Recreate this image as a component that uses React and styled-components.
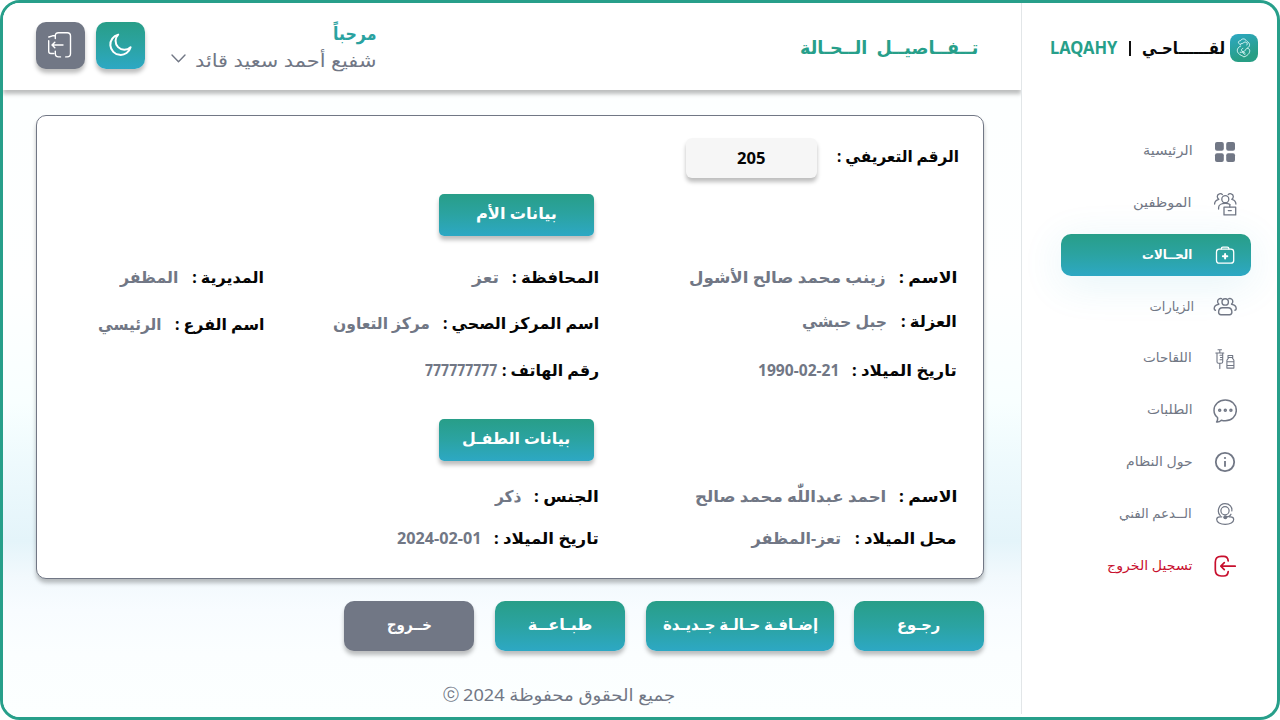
import React, { useLayoutEffect, useRef, useState } from 'react';
import styled, { createGlobalStyle } from 'styled-components';

const grad = 'linear-gradient(180deg, #289e88 0%, #2ba3a2 50%, #2da8c4 100%)';
const green = '#279f8a';
const grey = '#717785';
const drop = '0 4px 4px rgba(0, 0, 0, 0.26)';

const GlobalStyle = createGlobalStyle`
  * { box-sizing: border-box; }
  body { margin: 0; background: #fff; font-family: 'Noto Sans', 'DejaVu Sans', sans-serif; }
`;

const TextBox = styled.span`
  display: block;
  flex: none;
  width: ${(p) => p.$w}px;
  height: 24px;
  line-height: 24px;
  font-size: ${(p) => p.$size}px;
  font-weight: ${(p) => (p.$bold ? 700 : 400)};
  color: ${(p) => p.$color || 'inherit'};
  margin-top: ${(p) => p.$dy || 0}px;
`;
const TextRun = styled.span`
  display: inline-block;
  white-space: nowrap;
  transform-origin: right center;
`;

/* One line of text, stretched or condensed to fill a fixed measure. */
function Text({ w, size = 16, bold, color, dy, children }) {
  const ref = useRef(null);
  const [scale, setScale] = useState(1);
  useLayoutEffect(() => {
    setScale(w / ref.current.offsetWidth);
  }, [w, children]);
  return (
    <TextBox $w={w} $size={size} $bold={bold} $color={color} $dy={dy}>
      <TextRun ref={ref} style={{ transform: `scaleX(${scale})` }}>{children}</TextRun>
    </TextBox>
  );
}

const Frame = styled.div`
  direction: rtl;
  width: 1280px;
  height: 720px;
  display: flex;
  border: 3px solid ${green};
  border-radius: 20px;
  overflow: hidden;
  background: #fff;
`;
const Sidebar = styled.aside`
  flex: none;
  width: 256px;
  height: 711px;
  border-left: 1px solid #e2e6e8;
`;
const Brand = styled.div`
  display: flex;
  align-items: center;
  height: 90px;
  padding-right: 19px;
`;
const LogoTile = styled.div`
  width: 28px;
  height: 28px;
  border-radius: 8px;
  margin-left: 5px;
  background: linear-gradient(160deg, #2da8c4, #289e85 75%);
`;
const Divider = styled.span`
  width: 2px;
  height: 15px;
  margin: 0 11px 0 12px;
  background: #111;
`;
const Nav = styled.nav`
  display: flex;
  flex-direction: column;
  gap: 9.74px;
  padding: 38px 26px 0 39px;
`;
const NavItem = styled.a`
  display: flex;
  align-items: center;
  height: 42px;
  padding-right: 14px;
  gap: ${(p) => p.$gap}px;
  border-radius: 10px;
  color: ${(p) => p.$color};
  background: ${(p) => (p.$active ? grad : 'none')};
  box-shadow: ${(p) => (p.$active ? '0 8px 42px rgba(45, 168, 196, 0.12)' : 'none')};
`;
const Icon = styled.svg`
  display: block;
  flex: none;
  fill: none;
  stroke: currentColor;
  stroke-width: ${(p) => p.$stroke || 1.3};
  stroke-linecap: round;
  stroke-linejoin: round;
`;
const Chevron = styled(Icon)`
  margin-bottom: 4px;
`;

const Main = styled.main`
  flex: 1;
  display: flex;
  flex-direction: column;
  background: linear-gradient(180deg, #fff 0, #fdffff 100px, #feffff 290px, #f8ffff 400px, #eefafd 460px, #e4f4fa 538px, #f2f9fd 574px, #f8fcff 608px, #fbfeff 650px, #fcffff 100%);
`;
const Header = styled.header`
  display: flex;
  flex: none;
  height: 87px;
  background: #fff;
  box-shadow: ${drop};
  clip-path: inset(0 0 -10px 0);
  padding: 19px 43px 0 33px;
`;
const User = styled.div`
  display: flex;
  flex-direction: column;
  width: 205px;
  margin-right: auto;
  gap: 3px;
`;
const UserLine = styled.div`
  display: flex;
  align-items: center;
  gap: 9px;
`;
const HeadButton = styled.button`
  display: grid;
  place-items: center;
  width: 49px;
  height: 47px;
  padding: 0 0 1px;
  margin-right: ${(p) => p.$gap}px;
  border: 0;
  border-radius: 10px;
  color: #fff;
  background: ${(p) => p.$bg};
  box-shadow: ${drop};
`;

const Card = styled.section`
  flex: none;
  width: 948px;
  height: 464px;
  margin: 25px 37px 0 33px;
  padding: 22px 26px 0 0;
  background: #fff;
  border: 1px solid ${grey};
  border-radius: 10px;
  box-shadow: ${drop};
`;
const IdRow = styled.div`
  display: flex;
  gap: 20px;
  height: 40px;
  margin-right: -2px;
`;
const IdBox = styled.div`
  display: flex;
  justify-content: center;
  align-items: center;
  width: 131px;
  height: 40px;
  border-radius: 6px;
  background: #f6f6f6;
  box-shadow: ${drop};
`;
const SectionTitle = styled.h2`
  display: flex;
  justify-content: center;
  width: 155px;
  height: 42px;
  margin: ${(p) => p.$top}px 363px 0 0;
  padding-top: 7px;
  border-radius: 5px;
  color: #fff;
  background: ${grad};
  box-shadow: ${drop};
`;
const FieldGrid = styled.div`
  display: grid;
  grid-template-columns: 358px 335px 227px;
  grid-template-rows: ${(p) => p.$rows};
  margin-top: ${(p) => p.$top}px;
`;
const FieldBox = styled.div`
  display: flex;
  gap: ${(p) => p.$gap}px;
`;
const Actions = styled.div`
  display: flex;
  margin: 22px 37px 0 0;
`;
const ActionButton = styled.button`
  display: flex;
  justify-content: center;
  width: ${(p) => p.$w}px;
  height: 50px;
  margin: 0 ${(p) => p.$gap}px 0 0;
  padding: 11px 0 0;
  border: 0;
  border-radius: 10px;
  font-family: inherit;
  color: #fff;
  background: ${(p) => p.$bg};
  box-shadow: ${drop};
`;
const Footer = styled.footer`
  display: flex;
  gap: 4px;
  margin: 32px 346px 0 0;
`;

const icons = {
  home: (
    <g fill="currentColor" stroke="none">
      <rect x="2" y="2" width="8.8" height="8.8" rx="2" />
      <rect x="13.2" y="2" width="8.8" height="8.8" rx="2" />
      <rect x="2" y="13.2" width="8.8" height="8.8" rx="2" />
      <rect x="13.2" y="13.2" width="8.8" height="8.8" rx="2" />
    </g>
  ),
  staff: (
    <g>
      <circle cx="12.3" cy="7.2" r="3.500" />
      <path d="M9.400 2.600C8.200 1 4.500 1.400 4.300 4.400c0 1.300.6 2.300 1.500 2.900C3.200 8 1.600 9.800 1.600 12M15.200 2.600c1.200-1.600 4.900-1.200 5.100 1.800 0 1.300-.6 2.300-1.500 2.900 2.600.7 4.100 2.500 4.100 4.700" />
      <path d="M5.600 17v-1.600c0-2.400 2.800-4.100 6.700-4.100 2 0 3.600.4 4.700 1.200" />
      <rect x="11" y="15.200" width="11.700" height="7.700" />
      <path d="M16.800 15v-1.900M15.300 18.600h3" />
    </g>
  ),
  cases: (
    <g strokeWidth="1.300">
      <rect x="3.500" y="6.200" width="17.200" height="14" rx="2.800" />
      <path d="M8.300 5.900c0-1.200.7-1.700 1.600-1.700h4.400c.9 0 1.600.5 1.600 1.700" />
      <path d="M12.100 11.100v4.400M9.900 13.300h4.400" strokeWidth="2" />
    </g>
  ),
  visits: (
    <g strokeWidth="1.400">
      <circle cx="12.200" cy="6.900" r="3.200" />
      <path d="M8.600 3.700C6.700 3 4.600 4.300 4.600 6.400c0 1.100.5 2 1.300 2.600M15.800 3.700c1.900-.7 4 .6 4 2.700 0 1.100-.5 2-1.300 2.600M5.800 9.400C3.200 9.700 1.200 11.400 1.200 13.700c0 .8.500 1.300 1.300 1.500M18.600 9.400c2.600.3 4.600 2 4.600 4.300 0 .8-.5 1.300-1.300 1.500" />
      <path d="M9.500 12.700h5.500c2.300 0 3.900 2 3.900 4.600 0 1.700-.8 2.400-2.400 2.400H8c-1.600 0-2.400-.7-2.400-2.400 0-2.600 1.600-4.600 3.900-4.600z" />
    </g>
  ),
  vaccines: (
    <g strokeWidth="1.100">
      <path d="M5 2.700h3.500M6.800 2.700v3M2.800 6h8M4 6v8.700c0 1 .5 1.600 1.400 1.600h2.900c.9 0 1.400-.6 1.400-1.600V6M7 8.300h2.600M7.500 10.500h2M7 12.800h2.600M6.800 16.500v5" />
      <path d="M15 8.500h4.700v2H15zM15.500 10.600c0 1.400-1.600 1.800-1.600 3v7.500h7v-7.500c0-1.200-1.600-1.600-1.600-3M14 14.800h7M14 18.500h7" />
    </g>
  ),
  requests: (
    <g strokeWidth="1.500">
      <path d="M12.300 1C5.900 1 1 5.500 1 11.200c0 2.900 1.300 5.500 3.500 7.300.3 1.600.1 3.200-.9 4.400 1.700.2 3.300-.3 4.700-1.700 1.200.4 2.600.6 4 .6 6.400 0 11-4.500 11-10.400S18.700 1 12.300 1z" />
      <circle cx="6.700" cy="11.300" r="1" />
      <circle cx="12.300" cy="11.300" r="1" />
      <circle cx="17.900" cy="11.300" r="1" />
    </g>
  ),
  about: (
    <g strokeWidth="1.800">
      <circle cx="12" cy="12" r="9.200" />
      <path d="M12 11v5.800" strokeLinecap="butt" />
      <circle cx="12" cy="8" r="1.100" fill="currentColor" stroke="none" />
    </g>
  ),
  support: (
    <g strokeWidth="1.200">
      <circle cx="12" cy="8.800" r="4.100" />
      <path d="M7.300 13.600C3.500 10 5.600 1.700 12 1.700c4.800 0 7.400 3.500 6.800 7.300M18 12.200c-.8 1.700-2.500 2.600-4.500 2.700" />
      <circle cx="12.300" cy="15.300" r="2" fill="currentColor" stroke="none" />
      <path d="M8.800 14.800H7c-2 0-3.300 1-3.300 2.600 0 2.800 3.600 4.900 8.500 4.900s8.500-2.100 8.500-4.900c0-1.600-1.300-2.600-3.300-2.600h-1.200" />
    </g>
  ),
  logout: (
    <g strokeWidth="1.700">
      <path d="M15.200 6.800C14.900 3.700 13.500 2.400 10.700 2.400H8.200C4 2.400 2.300 4.100 2.300 8.300v7.800c0 4.200 1.700 5.900 5.900 5.900h2.500c2.800 0 4.200-1.300 4.500-4.400M22.200 12.200H8.500M11.300 8.700 7.800 12.200l3.500 3.500" />
    </g>
  ),
};

const navItems = [
  ['home', 'الرئيسية', 50, 20, -4],
  ['staff', 'الموظفين', 59, 21, -3],
  ['cases', 'الحــالات', 50, 21, -3],
  ['visits', 'الزيارات', 44, 19, -3],
  ['vaccines', 'اللقاحات', 49, 21, -3],
  ['requests', 'الطلبات', 46, 20, -3],
  ['about', 'حول النظام', 67, 20, -3],
  ['support', 'الــدعم الفني', 73, 21, -3],
  ['logout', 'تسجيل الخروج', 86, 20, -2],
];

const mother = [
  { label: 'الاسم :', lw: 58, value: 'زينب محمد صالح الأشول', vw: 197 },
  { label: 'المحافظة :', lw: 87, value: 'تعز', vw: 27 },
  { label: 'المديرية :', lw: 72, value: 'المظفر', vw: 58, gap: 14 },
  { label: 'العزلة :', lw: 56, value: 'جبل حبشي', vw: 85, dy: -2, gap: 14 },
  { label: 'اسم المركز الصحي :', lw: 156, value: 'مركز التعاون', vw: 97 },
  { label: 'اسم الفرع :', lw: 89, value: 'الرئيسي', vw: 63, dy: 1, gap: 14 },
  { label: 'تاريخ الميلاد :', lw: 105, value: '1990-02-21', vw: 81 },
  { label: 'رقم الهاتف :', lw: 97, value: '777777777', vw: 72, gap: 5 },
];
const child = [
  { label: 'الاسم :', lw: 58, value: 'احمد عبداللّٰه محمد صالح', vw: 191 },
  { label: 'الجنس :', lw: 65, value: 'ذكر', vw: 26 },
  { label: '', lw: 0, value: '', vw: 0 },
  { label: 'محل الميلاد :', lw: 102, value: 'تعز-المظفر', vw: 89, gap: 14 },
  { label: 'تاريخ الميلاد :', lw: 105, value: '2024-02-01', vw: 84, gap: 13 },
];

function Field({ label, lw, value, vw, gap = 13, dy }) {
  if (!label) return <FieldBox />;
  return (
    <FieldBox $gap={gap}>
      <Text w={lw} bold dy={dy} color="#050505">{label}</Text>
      <Text w={vw} bold dy={dy} color={grey}>{value}</Text>
    </FieldBox>
  );
}

const actions = [
  ['رجـوع', 130, 43, grad, 0],
  ['إضـافـة حـالـة جـديـدة', 188, 155, grad, 20],
  ['طبـاعــة', 130, 65, grad, 21],
  ['خــروج', 130, 45, grey, 21],
];

function Logo() {
  return (
    <LogoTile>
      <Icon width="28" height="28" viewBox="0 0 28 28" $stroke={0.9} color="#e6fbfa">
        <path d="M10.500 10.500C7.300 9.800 8 6.600 10.600 6.700c.7-2.300 4.800-2.500 5.600-.2M11 9.800c2.400.2 2.200-2 4.700-1.700 1.500.1 2 1.700 1.200 2.900M17.300 7.600c2.700 1.200 3.400 4.700.4 6.200" />
        <path d="M10.700 12c-3.300 1.200-4.500 4.800-2.300 7.300 1.700 1.900 4 2.400 5.500 3.600 3.400-1 6-3.500 5.800-6.400-.2-2.300-3-2.900-4-1-.8 1.500-1.500 2.300-3 1.900-1.800-.5-1.700-2.700.1-3M10.200 18.200c1.800-.4 3.400.7 4.700 2.400M12.500 17.600l2.500 1.500" />
      </Icon>
    </LogoTile>
  );
}

export default function App() {
  return (
    <>
      <GlobalStyle />
      <Frame>
        <Sidebar>
          <Brand>
            <Logo />
            <Text w={83} size={17} bold color="#080808">لقــــــاحـي</Text>
            <Divider />
            <Text w={67} size={17} bold color={green}>LAQAHY</Text>
          </Brand>
          <Nav>
            {navItems.map(([id, label, w, gap, dy]) => {
              const active = id === 'cases';
              const color = active ? '#fff' : id === 'logout' ? '#c8102e' : grey;
              return (
                <NavItem key={id} $gap={gap} $active={active} $color={color}>
                  <Icon width="24" height="24" viewBox="0 0 24 24">{icons[id]}</Icon>
                  <Text w={w} size={13} bold={active} dy={dy}>{label}</Text>
                </NavItem>
              );
            })}
          </Nav>
        </Sidebar>
        <Main>
          <Header>
            <Text w={178} size={18} bold color={green} dy={13}>{'تــفــاصيــل \u00a0الــحـالة'}</Text>
            <User>
              <Text w={43} size={18} bold color="#2aa2a0" dy={-1}>مرحباً</Text>
              <UserLine>
                <Text w={181} size={18} color={grey}>شفيع أحمد سعيد قائد</Text>
                <Chevron width="15" height="9" viewBox="0 0 15 9" color={grey} $stroke={1.4}>
                  <path d="M1 1l6.500 6.800L14 1" />
                </Chevron>
              </UserLine>
            </User>
            <HeadButton $bg={grad} $gap={26}>
              <Icon width="26" height="26" viewBox="1 1 26 26" $stroke={2}>
                <path d="M11.200 3.600A10.300 10.300 0 1 0 23.600 16.200 8.500 8.500 0 0 1 11.200 3.600z" />
              </Icon>
            </HeadButton>
            <HeadButton $bg={grey} $gap={11}>
              <Icon width="26" height="28" viewBox="1 0 26 28" $stroke={1.400}>
                <path d="M8.300 7.500V5c0-2.200 1-3.300 3.200-3.300h8.700c2.200 0 3.300 1.100 3.300 3.300v17.500c0 2.200-1.100 3.400-3.300 3.400h-1.500M13.500 25.900h-2c-2.200 0-3.200-1.200-3.200-3.400v-2.300M7.300 4.800H5.500L1.800 6M1.700 9.700v10.600c0 1.500.6 2.200 2.200 2.200h2.800M16 14H5.200M7.800 11.300 5 14l2.800 2.700" />
              </Icon>
            </HeadButton>
          </Header>
          <Card>
            <IdRow>
              <Text w={122} bold dy={6} color="#050505">الرقم التعريفي :</Text>
              <IdBox><Text w={28} bold color="#050505">205</Text></IdBox>
            </IdRow>
            <SectionTitle $top={16}><Text w={81} bold>بيانات الأم</Text></SectionTitle>
            <FieldGrid $top={29} $rows="46px 47px 24px">
              {mother.map((f) => <Field key={f.label} {...f} />)}
            </FieldGrid>
            <SectionTitle $top={37}><Text w={108} bold>بيانات الطفـل</Text></SectionTitle>
            <FieldGrid $top={23} $rows="42px 24px">
              {child.map((f, i) => <Field key={i} {...f} />)}
            </FieldGrid>
          </Card>
          <Actions>
            {actions.map(([label, w, tw, bg, gap]) => (
              <ActionButton key={label} $w={w} $bg={bg} $gap={gap}>
                <Text w={tw} bold>{label}</Text>
              </ActionButton>
            ))}
          </Actions>
          <Footer>
            <Text w={212} size={17} color={grey}>جميع الحقوق محفوظة 2024</Text>
            <Text w={16} size={16} color={grey} dy={-1}>ⓒ</Text>
          </Footer>
        </Main>
      </Frame>
    </>
  );
}
